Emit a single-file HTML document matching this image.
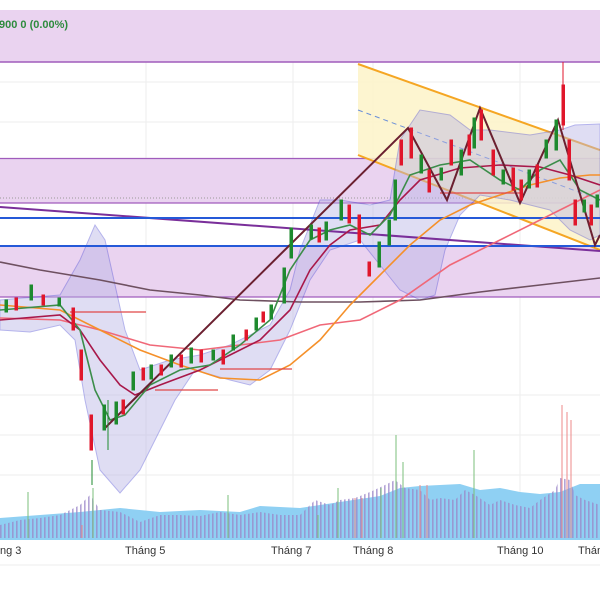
<!DOCTYPE html>
<html><head><meta charset="utf-8"><style>
html,body{margin:0;padding:0;background:#fff;width:600px;height:600px;overflow:hidden}
svg{display:block}
text{font-family:"Liberation Sans",sans-serif}
</style></head><body>
<svg width="600" height="600" viewBox="0 0 600 600" xmlns="http://www.w3.org/2000/svg">
<defs>
<pattern id="vb" width="4" height="10" patternUnits="userSpaceOnUse"><rect x="0" y="0" width="1.6" height="10" fill="#9a86c8"/></pattern>
</defs>
<rect width="600" height="600" fill="#fff"/>
<g stroke="#eeeeee" stroke-width="1">
<line x1="146" y1="10" x2="146" y2="540"/><line x1="293" y1="10" x2="293" y2="540"/><line x1="373" y1="10" x2="373" y2="540"/><line x1="520" y1="10" x2="520" y2="540"/>
<line x1="0" y1="82" x2="600" y2="82"/><line x1="0" y1="122" x2="600" y2="122"/><line x1="0" y1="395" x2="600" y2="395"/><line x1="0" y1="435" x2="600" y2="435"/><line x1="0" y1="475" x2="600" y2="475"/>
</g>
<rect x="0" y="10" width="600" height="52" fill="#ead3f0"/>
<line x1="0" y1="62" x2="600" y2="62" stroke="#a05cbc" stroke-width="1.5"/>
<rect x="0" y="158" width="600" height="45" fill="#ead3f0"/>
<line x1="0" y1="158.5" x2="600" y2="158.5" stroke="#a05cbc" stroke-width="1.2"/>
<line x1="0" y1="198" x2="600" y2="198" stroke="#999" stroke-width="1" stroke-dasharray="1,2"/>
<line x1="0" y1="203" x2="600" y2="203" stroke="#a05cbc" stroke-width="1.2"/>
<rect x="0" y="246" width="600" height="51" fill="#ead3f0"/>
<line x1="0" y1="297" x2="600" y2="297" stroke="#a05cbc" stroke-width="1.2"/>
<polygon points="358,64 600,150 600,250 358,155" fill="#fdf3c8" opacity="0.85"/>
<line x1="358" y1="64" x2="600" y2="150" stroke="#f5a623" stroke-width="2"/>
<line x1="358" y1="155" x2="600" y2="250" stroke="#f5a623" stroke-width="2"/>
<line x1="358" y1="110" x2="600" y2="200" stroke="#6a8fd8" stroke-width="1" stroke-dasharray="5,4"/>
<!-- volume -->
<polygon points="0,518 40,515 80,512 120,508 160,512 200,510 240,512 260,506 300,508 340,502 380,496 400,488 420,486 440,485 460,484 480,490 500,488 520,492 540,494 560,492 580,484 600,484 600,540 0,540" fill="#8fd0f3"/>
<polygon points="0,525 20,520 40,518 60,515 80,505 90,495 100,510 120,512 140,522 160,515 180,515 200,516 220,512 240,515 260,512 280,515 300,515 315,500 330,505 340,500 355,498 370,492 385,485 395,480 405,488 420,490 430,500 440,498 455,500 465,490 475,495 490,505 500,500 515,505 530,508 540,500 555,490 560,478 570,480 575,495 585,500 600,505 600,540 0,540" fill="url(#vb)" opacity="0.75"/>
<g stroke="#e88" stroke-width="1"><line x1="562" y1="405" x2="562" y2="540"/><line x1="567" y1="412" x2="567" y2="540"/><line x1="571" y1="420" x2="571" y2="540"/><line x1="355" y1="498" x2="355" y2="540"/><line x1="362" y1="498" x2="362" y2="540"/><line x1="420" y1="485" x2="420" y2="540"/><line x1="427" y1="485" x2="427" y2="540"/><line x1="82" y1="525" x2="82" y2="540"/></g>
<g stroke="#7bbf7b" stroke-width="1"><line x1="396" y1="435" x2="396" y2="540"/><line x1="403" y1="462" x2="403" y2="540"/><line x1="474" y1="450" x2="474" y2="540"/><line x1="381" y1="488" x2="381" y2="540"/><line x1="338" y1="488" x2="338" y2="540"/><line x1="228" y1="495" x2="228" y2="540"/><line x1="93" y1="488" x2="93" y2="540"/><line x1="28" y1="492" x2="28" y2="540"/><line x1="318" y1="515" x2="318" y2="540"/></g>
<line x1="0" y1="539" x2="600" y2="539" stroke="#8fd0f3" stroke-width="2"/>
<path d="M0,300 L60,295 L80,260 L95,225 L105,240 L125,330 L140,370 L170,360 L200,355 L230,345 L270,325 L290,290 L300,250 L320,200 L340,200 L370,205 L390,200 L400,140 L420,110 L450,115 L470,130 L490,130 L530,135 L560,130 L575,125 L600,124 L600,235 L590,240 L570,230 L550,210 L510,200 L480,195 L460,215 L445,250 L435,295 L420,300 L400,290 L380,265 L360,240 L330,250 L310,280 L290,330 L270,370 L250,385 L230,380 L195,370 L175,400 L160,430 L140,470 L120,493 L100,470 L85,400 L75,340 L60,325 L30,332 L0,330 Z" fill="#b9b6e6" opacity="0.45" stroke="#5a58d6" stroke-width="1"/>
<line x1="0" y1="207" x2="600" y2="251" stroke="#7a2f9a" stroke-width="2"/>
<line x1="0" y1="218" x2="600" y2="218" stroke="#2559d8" stroke-width="2"/>
<line x1="0" y1="246" x2="600" y2="246" stroke="#2559d8" stroke-width="2"/>
<g fill="none" stroke-width="1.6">
<polyline stroke="#6e5060" points="0,262 40,270 100,280 150,290 200,295 240,300 300,302 360,302 420,300 480,292 540,285 600,278"/>
<polyline stroke="#f06878" points="0,318 60,320 100,330 150,345 200,350 240,345 280,340 320,325 360,320 400,300 450,265 500,240 550,215 600,190"/>
<polyline stroke="#f5902a" points="0,305 60,310 100,330 140,350 180,365 220,378 260,380 290,365 320,340 350,305 380,275 410,245 440,220 470,205 500,195 530,185 560,178 590,175 600,175"/>
<polyline stroke="#a8184a" points="0,320 60,315 80,330 100,360 120,385 135,395 160,385 200,370 230,355 260,340 290,310 310,270 330,245 350,230 380,225 400,200 420,180 460,168 500,165 540,167 570,175 600,185"/>
<polyline stroke="#3c8d4a" points="0,310 60,305 80,330 95,390 110,420 125,415 150,385 180,370 210,365 240,345 270,320 290,270 310,240 330,230 350,225 370,235 390,215 410,175 440,165 470,160 500,180 520,190 540,170 560,160 580,190 600,200"/>
</g>
<g stroke="#e04848" stroke-width="1.2"><line x1="70" y1="312" x2="146" y2="312"/><line x1="155" y1="390" x2="218" y2="390"/><line x1="220" y1="369" x2="292" y2="369"/><line x1="440" y1="193" x2="520" y2="193"/></g>
<polyline fill="none" stroke="#6b2030" stroke-width="2" points="105,428 408,128 447,200 480,108 520,203 558,120 595,245 600,235"/>
<g stroke-width="1">
<g fill="#1e8a2e" stroke="#1e8a2e">
<rect x="5" y="300" width="2.5" height="12"/><rect x="30" y="285" width="2.5" height="15"/><rect x="58" y="298" width="2.5" height="8"/><rect x="103" y="405" width="2.5" height="25"/><rect x="115" y="402" width="2.5" height="22"/><rect x="132" y="372" width="2.5" height="18"/><rect x="150" y="365" width="2.5" height="14"/><rect x="170" y="355" width="2.5" height="12"/><rect x="190" y="348" width="2.5" height="15"/><rect x="212" y="350" width="2.5" height="10"/><rect x="232" y="335" width="2.5" height="15"/><rect x="255" y="318" width="2.5" height="12"/><rect x="270" y="305" width="2.5" height="14"/><rect x="283" y="268" width="2.5" height="35"/><rect x="290" y="228" width="2.5" height="30"/><rect x="310" y="225" width="2.5" height="14"/><rect x="325" y="222" width="2.5" height="18"/><rect x="340" y="200" width="2.5" height="20"/><rect x="378" y="242" width="2.5" height="25"/><rect x="388" y="220" width="2.5" height="25"/><rect x="394" y="180" width="2.5" height="40"/><rect x="420" y="155" width="2.5" height="18"/><rect x="440" y="168" width="2.5" height="12"/><rect x="460" y="150" width="2.5" height="25"/><rect x="473" y="118" width="2.5" height="30"/><rect x="502" y="170" width="2.5" height="14"/><rect x="528" y="170" width="2.5" height="18"/><rect x="545" y="140" width="2.5" height="18"/><rect x="555" y="120" width="2.5" height="30"/><rect x="583" y="200" width="2.5" height="12"/><rect x="596" y="195" width="2.5" height="12"/>
<line x1="92" y1="460" x2="92" y2="485"/><line x1="108" y1="400" x2="108" y2="450"/>
</g>
<g fill="#e0162b" stroke="#e0162b">
<rect x="15" y="298" width="2.5" height="12"/><rect x="42" y="295" width="2.5" height="10"/><rect x="72" y="308" width="2.5" height="22"/><rect x="80" y="350" width="2.5" height="30"/><rect x="90" y="415" width="2.5" height="35"/><rect x="122" y="400" width="2.5" height="14"/><rect x="142" y="368" width="2.5" height="12"/><rect x="160" y="365" width="2.5" height="10"/><rect x="180" y="355" width="2.5" height="12"/><rect x="200" y="350" width="2.5" height="12"/><rect x="222" y="350" width="2.5" height="14"/><rect x="245" y="330" width="2.5" height="10"/><rect x="262" y="312" width="2.5" height="10"/><rect x="318" y="228" width="2.5" height="14"/><rect x="348" y="205" width="2.5" height="18"/><rect x="358" y="215" width="2.5" height="28"/><rect x="368" y="262" width="2.5" height="14"/><rect x="400" y="140" width="2.5" height="25"/><rect x="410" y="128" width="2.5" height="30"/><rect x="428" y="170" width="2.5" height="22"/><rect x="450" y="140" width="2.5" height="25"/><rect x="468" y="135" width="2.5" height="20"/><rect x="480" y="110" width="2.5" height="30"/><rect x="492" y="150" width="2.5" height="25"/><rect x="512" y="168" width="2.5" height="22"/><rect x="520" y="180" width="2.5" height="20"/><rect x="536" y="165" width="2.5" height="22"/><rect x="562" y="85" width="2.5" height="40"/><rect x="568" y="140" width="2.5" height="40"/><rect x="574" y="200" width="2.5" height="25"/><rect x="590" y="205" width="2.5" height="20"/>
<line x1="563" y1="62" x2="563" y2="130"/>
</g>
</g>
<text x="-1" y="28" font-size="11" font-weight="bold" fill="#2e8b3e">900  0 (0.00%)</text>
<line x1="0" y1="565" x2="600" y2="565" stroke="#eee" stroke-width="1"/>
<g font-size="11" fill="#333">
<text x="0" y="554">ng 3</text><text x="125" y="554">Tháng 5</text><text x="271" y="554">Tháng 7</text><text x="353" y="554">Tháng 8</text><text x="497" y="554">Tháng 10</text><text x="578" y="554">Thán</text>
</g>
</svg>
</body></html>
